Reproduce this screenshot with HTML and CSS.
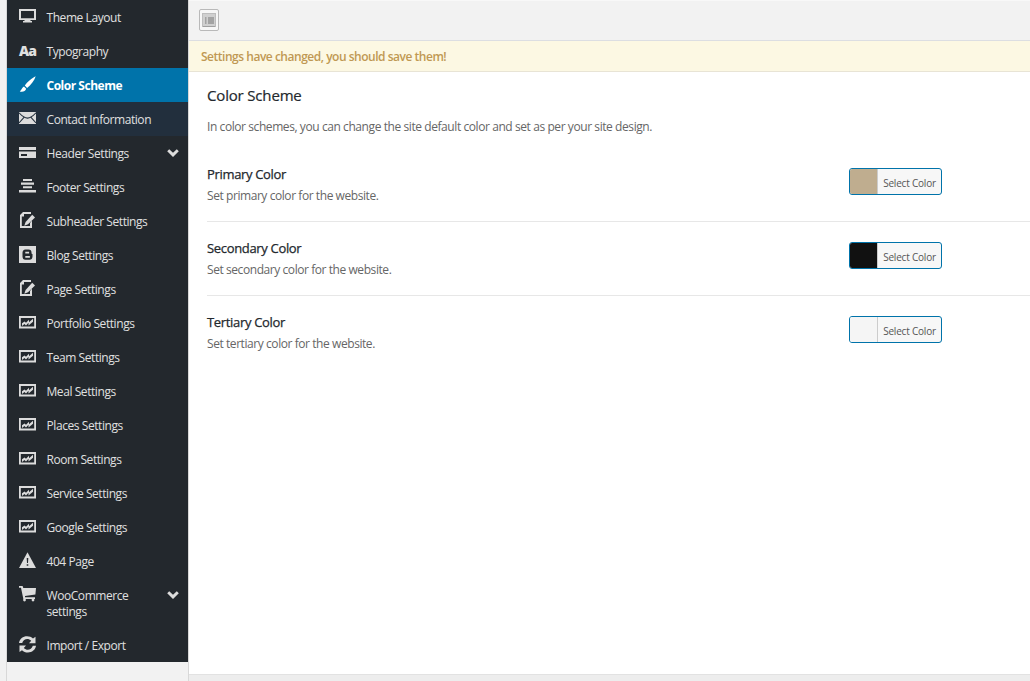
FILE: index.html
```html
<!DOCTYPE html>
<html lang="en">
<head>
<meta charset="utf-8">
<title>Color Scheme</title>
<link rel="stylesheet" href="styles.css">
</head>
<body>
<svg class="defs" width="0" height="0">
  <symbol id="desktop" viewBox="0 0 17 17"><path fill-rule="evenodd" d="M0 1h17v11h-5.500v1h1.500v1.500H4V13h1.500v-1H0zM2 3v7.200h13V3z"/></symbol>
  <symbol id="brush" viewBox="0 0 17 17"><path d="M16.700.3C13 2 8.300 6 5.800 9.600l2.300 2.300C12 9 15.400 4.500 16.700.3zM5 10.600c-1.700.6-1.800 2.500-4.200 5 3 .8 5.700-.2 6.400-2.800z"/></symbol>
  <symbol id="mail" viewBox="0 0 17 17"><path d="M0 2h17v12H0z"/><path class="cut" fill="none" d="M0 2.800c2.500 2.700 5.500 5.300 8.500 5.300S14.500 5.500 17 2.800M0 13l5-5.600M17 13l-5-5.600"/></symbol>
  <symbol id="card" viewBox="0 0 17 17"><path fill-rule="evenodd" d="M0 3h17v3H0zM0 7.500h17V14H0zM2 10v2h6v-2z"/></symbol>
  <symbol id="center" viewBox="0 0 17 17"><path d="M4 1h9v2H4zM2 4.600h13v2.200H2zM4 8.300h9v2H4zM0 12h17v2.500H0z"/></symbol>
  <symbol id="edit" viewBox="0 0 17 17"><path fill-rule="evenodd" d="M4 0h8v2H5v2.500H2.800V14H11v-3l2-2.500V16H1V3z"/><path d="M13.200 2.800l2.800 2.700-7 6.700-3.700 1.600L6.600 10z"/></symbol>
  <symbol id="blogger" viewBox="0 0 17 17"><path d="M0 0h17v17H0z"/><path class="hole" fill-rule="evenodd" d="M6.500 3.500h3c2 0 3 1.200 3 3 0 1 .3 1.500 1 1.600v2.400c0 2-1.200 3.300-3 3.300h-4c-2 0-3-1.300-3-3.300V6.800c0-2 1-3.300 3-3.300zM6.300 5.800v1.700h3.800V5.800zM6.300 10v1.700h4.600V10z"/></symbol>
  <symbol id="graph" viewBox="0 0 17 17"><path fill-rule="evenodd" d="M0 2h17v12.500H0zM1.800 4v8.500h13.400V4z"/><path d="M3 9.200l2.500-1.700L7 8.700l3-3v2.500l4-3.500v3L9.500 11.500v-2.700L7 11.400 5.500 10 3 12z"/></symbol>
  <symbol id="warn" viewBox="0 0 17 17"><path d="M8.500.2L17 16H0z"/><path class="hole" d="M7.700 6h1.600l-.3 5H8zM7.700 12.200h1.600v1.500H7.700z"/></symbol>
  <symbol id="cart" viewBox="0 0 17 17"><path d="M0 0h3.600l.7 2H17l-.6 6.500L6 10v1.200h10V13H4.400L3.500 9 2 1.800H0z"/><circle cx="5.500" cy="14" r="1.400"/><circle cx="14" cy="14" r="1.400"/></symbol>
  <symbol id="sync" viewBox="0 0 17 17"><path d="M0 7C.6 3 4 .3 8 .3c2.500 0 4.400.8 6 2.300L16.500.8V7.200H10l2.200-2.400C9 1.600 4.500 3 3.200 7zM17 9.800c-.6 4-4 6.700-8 6.700-2.500 0-4.400-.8-6-2.300L.5 16V9.600H7L4.800 12c3.200 3.200 7.700 1.800 9-2.200z"/></symbol>
  <symbol id="chev" viewBox="0 0 12 8"><path d="M2.200.3L6 3.800 9.800.3l2 2L6 8 .2 2.300z"/></symbol>
</svg>
<div class="app">
  <nav class="sidebar">
    <a class="item"><svg class="icon"><use href="#desktop"/></svg><span>Theme Layout</span></a>
    <a class="item"><b class="icon aa">Aa</b><span>Typography</span></a>
    <a class="item active"><svg class="icon"><use href="#brush"/></svg><span>Color Scheme</span></a>
    <a class="item hover"><svg class="icon"><use href="#mail"/></svg><span>Contact Information</span></a>
    <a class="item"><svg class="icon"><use href="#card"/></svg><span>Header Settings</span><svg class="chev"><use href="#chev"/></svg></a>
    <a class="item"><svg class="icon"><use href="#center"/></svg><span>Footer Settings</span></a>
    <a class="item"><svg class="icon"><use href="#edit"/></svg><span>Subheader Settings</span></a>
    <a class="item"><svg class="icon"><use href="#blogger"/></svg><span>Blog Settings</span></a>
    <a class="item"><svg class="icon"><use href="#edit"/></svg><span>Page Settings</span></a>
    <a class="item"><svg class="icon"><use href="#graph"/></svg><span>Portfolio Settings</span></a>
    <a class="item"><svg class="icon"><use href="#graph"/></svg><span>Team Settings</span></a>
    <a class="item"><svg class="icon"><use href="#graph"/></svg><span>Meal Settings</span></a>
    <a class="item"><svg class="icon"><use href="#graph"/></svg><span>Places Settings</span></a>
    <a class="item"><svg class="icon"><use href="#graph"/></svg><span>Room Settings</span></a>
    <a class="item"><svg class="icon"><use href="#graph"/></svg><span>Service Settings</span></a>
    <a class="item"><svg class="icon"><use href="#graph"/></svg><span>Google Settings</span></a>
    <a class="item"><svg class="icon"><use href="#warn"/></svg><span>404 Page</span></a>
    <a class="item"><svg class="icon"><use href="#cart"/></svg><span>WooCommerce<br>settings</span><svg class="chev"><use href="#chev"/></svg></a>
    <a class="item"><svg class="icon"><use href="#sync"/></svg><span>Import / Export</span></a>
  </nav>
  <main class="main">
    <header class="toolbar"><button class="expand"><svg width="14" height="16" viewBox="0 0 14 16"><rect x=".5" y="1.500" width="13" height="13" fill="#d0d0d0" stroke="#bdbdbd"/><path d="M1 14.500h12" stroke="#a0a0a0"/><path d="M3 5h1.500v7H3zM6 5h6v7H6z" fill="#a3a3a3"/></svg></button></header>
    <div class="notice">Settings have changed, you should save them!</div>
    <section class="content">
      <h2 class="title">Color Scheme</h2>
      <p class="intro">In color schemes, you can change the site default color and set as per your site design.</p>
      <div class="field">
        <div class="label"><h3 class="name">Primary Color</h3><p class="desc">Set primary color for the website.</p></div>
        <button class="picker"><i class="swatch tan"></i><span class="pick">Select Color</span></button>
      </div>
      <div class="field">
        <div class="label"><h3 class="name">Secondary Color</h3><p class="desc">Set secondary color for the website.</p></div>
        <button class="picker"><i class="swatch black"></i><span class="pick">Select Color</span></button>
      </div>
      <div class="field">
        <div class="label"><h3 class="name">Tertiary Color</h3><p class="desc">Set tertiary color for the website.</p></div>
        <button class="picker"><i class="swatch light"></i><span class="pick">Select Color</span></button>
      </div>
    </section>
    <footer class="footer"></footer>
  </main>
</div>
</body>
</html>
```
FILE: styles.css
```css
* { box-sizing: border-box; }
body { margin: 0; background: #f1f1f1; font-family: "Open Sans", "Noto Sans", sans-serif; }
h2, h3, p { margin: 0; }
button { padding: 0; font-family: inherit; }
.defs { display: block; height: 0; }
.app { display: flex; height: 681px; padding-left: 6px; overflow: hidden; }
.sidebar { width: 183px; flex: none; border: solid #d8d8d8; border-width: 0 1px; background: #f2f2f2; }
.item { display: flex; align-items: flex-start; min-height: 34px; padding: 9px 9px 9px 12px; background: #23282d; color: #e0e0e0; fill: #dcdcdc; font-size: 12px; line-height: 16px; letter-spacing: -0.43px; }
.item span { flex: 1; padding-top: 1px; margin-bottom: -1px; white-space: nowrap; }
.icon { width: 17px; height: 17px; flex: none; margin: -1px 10.500px 0 0; }
.aa { font-size: 14px; line-height: 17px; letter-spacing: -1px; font-weight: 800; }
.cut { stroke: #222f3d; stroke-width: 1.1; }
.hole { fill: #23282d; }
.active { background: #0073aa; color: #fff; fill: #fff; font-weight: 700; letter-spacing: -0.48px; }
.hover { background: #222f3d; }
.chev { width: 12px; height: 8px; margin-top: 4px; }
.main { flex: 1; display: flex; flex-direction: column; background: #fff; }
.toolbar { height: 41px; padding: 9px 10px; background: #f2f2f2; border-top: 1px solid #f8f8f8; border-bottom: 1px solid #dcdee2; }
.expand { display: grid; place-items: center; width: 20px; height: 22px; margin-top: -1px; background: #f7f7f7; border: 1px solid #b9b9b9; border-radius: 2px; }
.notice { height: 31px; padding-left: 12px; background: #fcf8e3; border-bottom: 1px solid #e8e4d5; color: #c09853; font-size: 12px; font-weight: 600; line-height: 31px; letter-spacing: -0.48px; }
.content { flex: 1; padding: 13px 0 0 18px; }
.title { font-size: 15px; font-weight: 400; line-height: 20px; color: #23282d; letter-spacing: -0.17px; -webkit-text-stroke: 0.2px #23282d; }
.intro { margin-top: 13px; font-size: 12px; line-height: 18px; color: #666; letter-spacing: -0.42px; }
.field { display: flex; height: 74px; padding-top: 20px; border-bottom: 1px solid #e7e7e7; }
.intro + .field { margin-top: 12px; }
.field:last-child { border: 0; }
.label { width: 642px; margin-top: -3px; }
.name { font-size: 13px; font-weight: 400; line-height: 18px; color: #23282d; letter-spacing: -0.33px; -webkit-text-stroke: 0.25px #23282d; }
.desc { margin-top: 4px; font-size: 12px; line-height: 18px; color: #666; letter-spacing: -0.43px; }
.picker { display: flex; width: 93px; height: 27px; overflow: hidden; border: 1px solid #0073aa; border-radius: 3px; background: #f7f7f7; }
.swatch { width: 28px; height: 25px; border-right: 1px solid #ccc; }
.tan { background: #bfad8f; }
.black { background: #111; }
.light { background: #f5f5f5; }
.pick { flex: 1; font-size: 10px; line-height: 28px; color: #555; text-align: center; white-space: nowrap; letter-spacing: -0.2px; }
.footer { height: 7px; border-top: 1px solid #e2e2e2; background: #ededed; }
```
